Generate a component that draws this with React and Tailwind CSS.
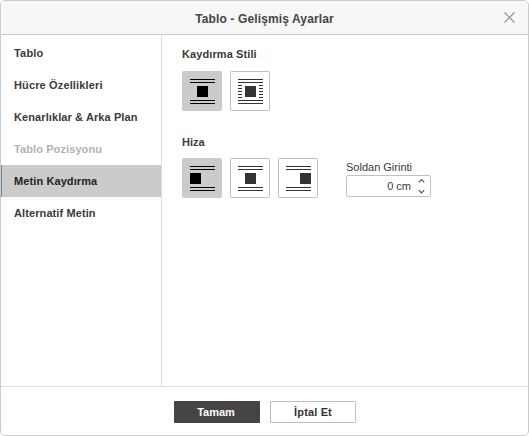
const MENU = [
  { label: 'Tablo', track: 'tracking-[0.2px]' },
  { label: 'Hücre Özellikleri', track: 'tracking-[0.14px]' },
  { label: 'Kenarlıklar & Arka Plan', track: 'tracking-[0.1px]' },
  { label: 'Tablo Pozisyonu', track: 'tracking-[0.1px]', disabled: true },
  { label: 'Metin Kaydırma', track: 'tracking-[0.1px]', active: true },
  { label: 'Alternatif Metin', track: 'tracking-[0.1px]' },
];

function WrapIcon({ squareX = 15, around = false }) {
  return (
    <svg width="40" height="40" viewBox="0 0 40 40" fill="currentColor" shapeRendering="crispEdges" className="shrink-0">
      {[8, 11, 29, 32].map((y) => (
        <rect key={y} x="8" y={y} width="25" height="1" />
      ))}
      {around &&
        [14, 17, 20, 23, 26].map((y) => (
          <g key={y}>
            <rect x="8" y={y} width="4" height="1" />
            <rect x="29" y={y} width="4" height="1" />
          </g>
        ))}
      <rect x={squareX} y="15" width="11" height="11" />
    </svg>
  );
}

function Tile({ active, children }) {
  return (
    <button
      className={`flex size-10 items-center justify-center rounded-[2px] ${
        active ? 'bg-[#cbcbcb] text-black' : 'bg-white text-[#333] ring-1 ring-inset ring-[#c0c0c0]'
      }`}
    >
      {children}
    </button>
  );
}

export default function App() {
  return (
    <div className="h-[436px] w-[529px] bg-white font-['Liberation_Sans',Arial,sans-serif] text-[11px] text-[#3a3a3a]">
      <div className="flex h-full flex-col overflow-hidden rounded-[5px] border border-[#cbcbcb]">
        <header className="flex h-[34px] shrink-0 items-center border-b border-[#cbcbcb] bg-[#f7f7f7] pr-3">
          <h1 className="flex-1 pl-[25px] pt-[2px] text-center text-[12px] font-bold tracking-[0.13px] text-[#444]">Tablo - Gelişmiş Ayarlar</h1>
          <svg width="13" height="13" viewBox="0 0 13 13" stroke="#8c8c8c" strokeWidth="1.1" fill="none">
            <path d="M1.5 1.5l10 10M11.5 1.5l-10 10" />
          </svg>
        </header>
        <div className="flex flex-1">
          <nav className="w-[161px] border-r border-[#dedede] pt-[2px] font-bold">
            {MENU.map((m) => (
              <div
                key={m.label}
                className={`flex h-8 items-center border-l pl-3 ${m.track} ${
                  m.active ? 'border-[#7d858c] bg-[#cbcbcb] text-[#222]' : 'border-transparent'
                } ${m.disabled ? 'text-[#b2b2b2]' : ''}`}
              >
                {m.label}
              </div>
            ))}
          </nav>
          <main className="flex-1 pl-5 pt-[13px]">
            <h2 className="h-[23px] font-bold leading-[13px] tracking-[0.1px]">Kaydırma Stili</h2>
            <div className="flex gap-2">
              <Tile active><WrapIcon /></Tile>
              <Tile><WrapIcon around /></Tile>
            </div>
            <h2 className="mt-[25px] h-[22px] font-bold leading-[13px]">Hiza</h2>
            <div className="flex">
              <div className="flex gap-2">
                <Tile active><WrapIcon squareX={8} /></Tile>
                <Tile><WrapIcon /></Tile>
                <Tile><WrapIcon squareX={22} /></Tile>
              </div>
              <div className="ml-7">
                <label className="block h-[17px] pt-[3px] leading-[13px]">Soldan Girinti</label>
                <div className="flex h-[22px] w-[85px] items-center rounded-[2px] border border-[#c0c0c0] pr-[4px]">
                  <span className="flex-1 pr-[6px] text-right text-[11px]">0 cm</span>
                  <svg width="9" height="20" viewBox="0 0 9 20" fill="none" stroke="#555" strokeWidth="1.2">
                    <path d="M1.7 6.3L4.5 3.5L7.3 6.3M1.7 14.2L4.5 17L7.3 14.2" />
                  </svg>
                </div>
              </div>
            </div>
          </main>
        </div>
        <footer className="flex h-[49px] shrink-0 justify-center gap-[10px] border-t border-[#dedede] pl-[1px] pt-[14px] font-bold">
          <button className="h-[22px] w-[86px] rounded-[1px] bg-[#444] pr-[2px] text-white">Tamam</button>
          <button className="h-[22px] w-[86px] rounded-[1px] border border-[#c0c0c0] bg-white tracking-[0.15px] text-[#333]">İptal Et</button>
        </footer>
      </div>
    </div>
  );
}
